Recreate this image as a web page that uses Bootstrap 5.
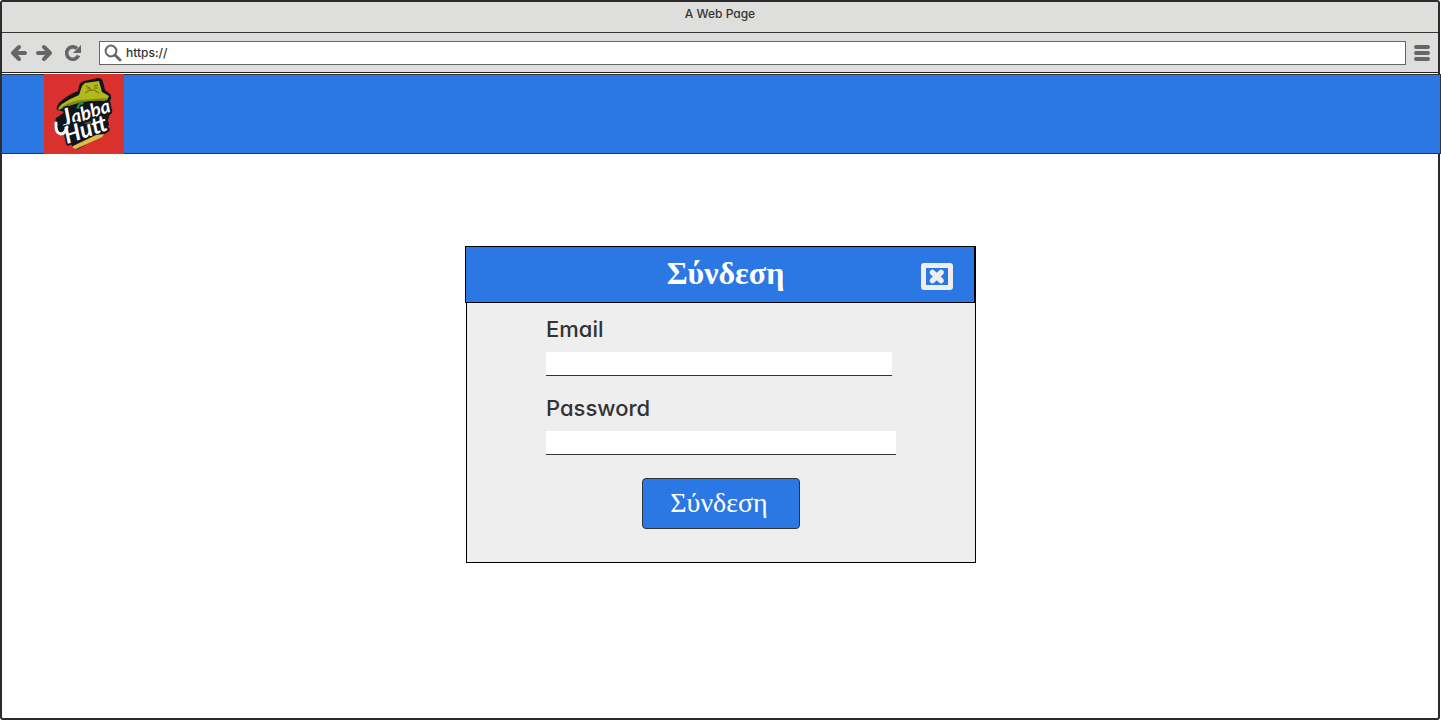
<!DOCTYPE html>
<html lang="el">
<head>
<meta charset="utf-8">
<meta name="viewport" content="width=device-width, initial-scale=1">
<title>A Web Page</title>
<link href="https://cdn.jsdelivr.net/npm/bootstrap@5.3.0/dist/css/bootstrap.min.css" rel="stylesheet">
<style>
  :root { --brand: #2b78e4; --ink: #333; --tool: #666; }
  body { font-family: Inter, "Open Sans", sans-serif; font-feature-settings: "cv11"; color: var(--ink); background: #fff; }
  .browser { border: 2px solid #2c2a2b; border-radius: 3px; margin-right: 1px; }
  .chrome { background: #dededc; }
  .title-bar { height: 31px; border-bottom: 1px solid var(--ink); font-size: 12px; line-height: 24px; font-weight: 500; }
  .tool-bar { height: 40px; border-bottom: 1px solid #222; padding: 0 7px; }
  .tool-btn { color: var(--tool); line-height: 0; }
  .tool-btn-reload { margin-left: 10px; }
  .address { height: 24px; border: 1px solid var(--tool); margin: 0 7px 0 16px; padding-left: 4px; }
  .address input { font-size: 12px; line-height: 22px; font-weight: 500; color: var(--ink); outline: 0; }
  .site-header { height: 80px; background: var(--brand); border: 1px solid #333; margin: 1px -3px 0 -1px; padding-left: 42px; }
  .site-header svg { margin: -1px 0; }
  .logo-word { font-family: Lato, sans-serif; font-weight: 700; font-style: italic; fill: #fff; stroke: #10151d; stroke-width: 4px; paint-order: stroke; stroke-linejoin: round; }
  .stage { padding-top: 92px; padding-bottom: 24px; }
  .login { width: 510px; margin-left: 2px; background: #eee; border: 1px solid #000; }
  .login-head { height: 57px; margin: -1px 0 0 -2px; background: var(--brand); border: 1px solid #000; padding: 0 21px 0 64px; }
  .login-head h1, .submit { font-family: "Liberation Serif", serif; color: #fff; }
  .login-head h1 { font-size: 32px; line-height: 52px; font-weight: 700; }
  .login-form { padding: 12px 79px 33px; }
  .login-form label { font-size: 22px; line-height: 28px; font-weight: 500; margin-bottom: 9px; }
  .field { height: 24px; background: #fff; border: 0; border-bottom: 1px solid #333; border-radius: 0; padding: 0 4px; font-size: 16px; }
  .field-email { width: 346px; margin-bottom: 18px; }
  .field-password { width: 350px; margin-bottom: 23px; }
  .submit { width: 158px; height: 51px; background: var(--brand); border: 1px solid #333; border-radius: 4px; font-size: 28px; line-height: 46px; padding: 0 4px 2px 0; }
  .submit:hover { background: #1f66cb; color: #fff; border-color: #333; }
</style>
</head>
<body>
<div class="browser min-vh-100 d-flex flex-column">
  <div class="chrome">
    <div class="title-bar text-center">A Web Page</div>
    <div class="tool-bar d-flex align-items-center">
      <button class="tool-btn btn p-0 border-0" type="button" aria-label="Back">
        <svg width="20" height="20" viewBox="0 0 20 20" fill="none" stroke="currentColor" stroke-width="4" stroke-linecap="round" stroke-linejoin="round"><path d="m10 4-6 6 6 6M5 10h11"/></svg>
      </button>
      <button class="tool-btn btn p-0 border-0 ms-1" type="button" aria-label="Forward">
        <svg width="20" height="20" viewBox="0 0 20 20" fill="none" stroke="currentColor" stroke-width="4" stroke-linecap="round" stroke-linejoin="round"><path d="m11 4 6 6-6 6M16 10H5"/></svg>
      </button>
      <button class="tool-btn tool-btn-reload btn p-0 border-0" type="button" aria-label="Reload">
        <svg width="20" height="20" viewBox="0 0 20 20" fill="none" stroke="currentColor"><path d="M14 5.500A6.200 6.200 0 1 0 15.500 12.500" stroke-width="3.600"/><path d="M18 2v8h-8z" fill="currentColor" stroke="none"/></svg>
      </button>
      <div class="address bg-white d-flex align-items-center flex-grow-1">
        <svg width="18" height="18" viewBox="0 0 18 18" fill="none" stroke="#666" aria-hidden="true"><circle cx="7" cy="7" r="5.400" stroke-width="2"/><path d="m11 11 5 5" stroke-width="3" stroke-linecap="round"/></svg>
        <input class="border-0 bg-transparent p-0 ms-1 flex-grow-1" type="text" value="https://" aria-label="Address">
      </div>
      <button class="tool-btn btn p-0 border-0" type="button" aria-label="Menu">
        <svg width="18" height="18" viewBox="0 0 18 18" stroke="currentColor" stroke-width="4" stroke-linecap="round"><path d="M3 3h12M3 9h12M3 15h12"/></svg>
      </button>
    </div>
  </div>

  <header class="site-header d-flex">
    <a href="#" aria-label="Jabba the Hutt">
      <svg class="d-block" width="80" height="80" viewBox="0 0 80 80">
        <path fill="#d9312e" d="M0 0h80v80H0z"/>
        <path d="M35 12q1-4 5-5l14-3q4 0 5 4l2 8 5 4q2 2 1 5l-3 4 3 9-2 5-1 3 1 5-2 3-1 5-26 15q-6 3-7-1l-2-4-4-8q-11 1-13-8l2-9 9-6-8-2q-1-3 2-7 8-8 19-12z" fill="#10151d"/>
        <path d="M14 36q1-4 4-6 7-5 17-9l3-9 3-3 14-2 3 11 7 4-2 4q-21-3-49 10z" fill="#b3b81b"/>
        <path d="M14 36q9-8 21-10l28-2-2 3q-22-2-47 9z" fill="#818b16"/>
        <path d="m42 12 4 2m4-2 4-1M41 19q5-4 9-3l5 3M43 15h4m3-1h4" fill="none" stroke="#6b6514"/>
        <text class="logo-word" font-size="19" transform="translate(20 53) rotate(-18)"><tspan font-size="24">J</tspan>abba</text>
        <text class="logo-word" font-size="23" transform="translate(23 70) rotate(-19)">Hutt</text>
        <path d="m40 49 7-2v3h-6z" fill="#574d15"/>
        <path d="m32 34 3-5 3-2 2 3-4 1-1 4z" fill="#218650"/>
        <path d="m29 72 23-11 8-1q-1 3-4 4L32 75q-4 0-3-3z" fill="#dabd4b"/>
        <path d="M12 49q-1 10 5 11 4 0 6-7" fill="none" stroke="#fff" stroke-width="3" stroke-linecap="round"/>
      </svg>
    </a>
  </header>

  <main class="stage d-flex justify-content-center align-items-start">
    <section class="login" aria-labelledby="login-title">
      <div class="login-head d-flex align-items-start">
        <h1 id="login-title" class="flex-grow-1 text-center mb-0">Σύνδεση</h1>
        <button class="btn p-0 border-0 lh-1 mt-3" type="button" aria-label="Κλείσιμο">
          <svg class="d-block" width="32" height="27" viewBox="0 0 32 27"><path d="M3 0h26q3 0 3 3v21q0 3-3 3H3q-3 0-3-3V3q0-3 3-3zm2 5v17h22V5z" fill="#eee" fill-rule="evenodd"/><path d="m11.500 9.500 8.500 8m0-8-8.500 8" stroke="#eee" stroke-width="5.500" stroke-linecap="round" transform="translate(0 0)"/></svg>
        </button>
      </div>
      <form class="login-form d-flex flex-column align-items-start" onsubmit="return false">
        <label for="email">Email</label>
        <input class="field field-email" id="email" type="email">
        <label for="password">Password</label>
        <input class="field field-password" id="password" type="password">
        <button class="submit btn align-self-center" type="submit">Σύνδεση</button>
      </form>
    </section>
  </main>
</div>
<script src="https://cdn.jsdelivr.net/npm/bootstrap@5.3.0/dist/js/bootstrap.bundle.min.js"></script>
</body>
</html>
